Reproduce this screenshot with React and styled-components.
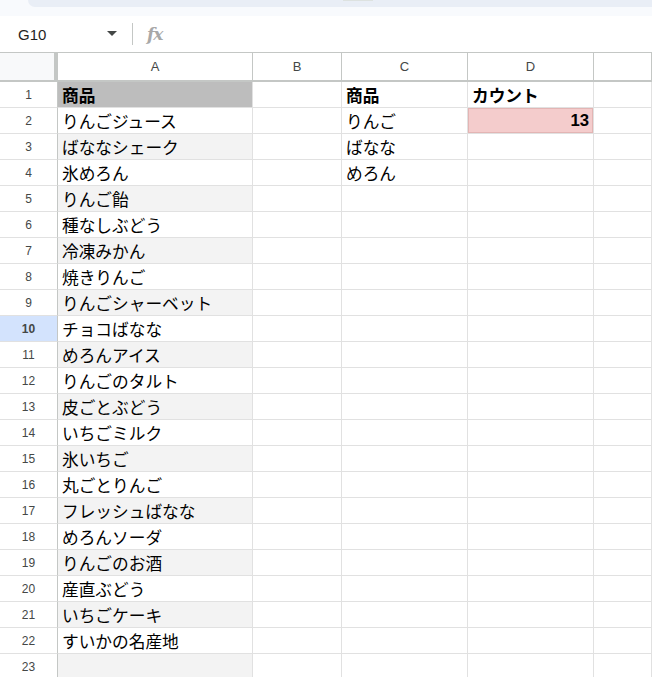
import React from "react";
import styled, { createGlobalStyle } from "styled-components";

const GlobalStyle = createGlobalStyle`
  html, body {
    margin: 0;
    padding: 0;
    background: #ffffff;
    font-family: "Liberation Sans", "Noto Sans CJK JP", sans-serif;
    overflow: hidden;
  }
`;

const Page = styled.div`
  width: 652px;
  height: 677px;
  overflow: hidden;
  background: #ffffff;
`;

const TopBand = styled.div`
  height: 16px;
  background: #f8fafd;
  display: flex;
`;

const Pill = styled.div`
  flex: 1;
  margin-left: 28px;
  height: 7px;
  background: #e9eef6;
  border-bottom-left-radius: 14px;
  display: flex;
  padding-left: 315px;
`;

const Handle = styled.div`
  width: 30px;
  height: 1px;
  background: #dde2e0;
`;

const Toolbar = styled.div`
  height: 36px;
  display: flex;
  align-items: center;
`;

const NameBox = styled.div`
  width: 132px;
  display: flex;
  align-items: center;
  justify-content: space-between;
  padding: 0 15px 0 18px;
  box-sizing: border-box;
  font-size: 15px;
  color: #1f1f1f;
`;

const Divider = styled.div`
  width: 1px;
  height: 22px;
  background: #c4c7c5;
`;

const Fx = styled.span`
  margin-left: 14px;
  font-family: "DejaVu Serif", serif;
  font-style: italic;
  font-weight: 700;
  font-size: 17px;
  color: #a8a8a8;
  letter-spacing: -1px;
`;

const Grid = styled.div`
  display: grid;
  grid-template-columns: 58px 195px 89px 126px 126px 1fr;
  grid-template-rows: 29px;
  grid-auto-rows: 26px;
  border-top: 1px solid #c4c7c5;
`;

const Corner = styled.div`
  background: #f8f9fa;
  border-right: 4px solid #c4c7c5;
  border-bottom: 2px solid #c4c7c5;
  box-sizing: border-box;
`;

const ColHead = styled.div`
  display: flex;
  align-items: center;
  justify-content: center;
  font-size: 13px;
  color: #444746;
  border-right: 1px solid #c4c7c5;
  border-bottom: 2px solid #c4c7c5;
  box-sizing: border-box;
`;

const RowHead = styled.div`
  display: flex;
  align-items: center;
  justify-content: center;
  font-size: 12px;
  color: #444746;
  font-weight: ${(p) => (p.$active ? 700 : 400)};
  background: ${(p) => (p.$active ? "#d3e3fd" : "#ffffff")};
  border-right: 1px solid #c4c7c5;
  border-bottom: 1px solid #e1e1e1;
  box-sizing: border-box;
`;

const Cell = styled.div`
  display: flex;
  align-items: center;
  justify-content: ${(p) => (p.$right ? "flex-end" : "flex-start")};
  padding: 0 4px;
  font-size: 16.7px;
  color: #000000;
  white-space: nowrap;
  font-weight: ${(p) => (p.$bold ? 700 : 400)};
  background: ${(p) => p.$bg || "transparent"};
  border-right: 1px solid #e1e1e1;
  border-bottom: 1px solid #e1e1e1;
  box-sizing: border-box;
  overflow: hidden;
  ${(p) => p.$hit && "box-shadow: inset 0 0 0 1px #e3b5b4;"}
`;

const items = [
  "商品",
  "りんごジュース",
  "ばななシェーク",
  "氷めろん",
  "りんご飴",
  "種なしぶどう",
  "冷凍みかん",
  "焼きりんご",
  "りんごシャーベット",
  "チョコばなな",
  "めろんアイス",
  "りんごのタルト",
  "皮ごとぶどう",
  "いちごミルク",
  "氷いちご",
  "丸ごとりんご",
  "フレッシュばなな",
  "めろんソーダ",
  "りんごのお酒",
  "産直ぶどう",
  "いちごケーキ",
  "すいかの名産地",
  "",
];

const side = { 1: ["商品", "カウント"], 2: ["りんご", "13"], 3: ["ばなな", ""], 4: ["めろん", ""] };

const columnBg = (row) => {
  if (row === 1) return "#bdbdbd";
  return row % 2 === 1 ? "#f3f3f3" : "#ffffff";
};

const Caret = () => (
  <svg width="10" height="6" viewBox="0 0 10 6">
    <path d="M0 0h10L5 5z" fill="#444746" />
  </svg>
);

export default function App() {
  return (
    <Page>
      <GlobalStyle />
      <TopBand>
        <Pill>
          <Handle />
        </Pill>
      </TopBand>
      <Toolbar>
        <NameBox>
          G10
          <Caret />
        </NameBox>
        <Divider />
        <Fx>fx</Fx>
      </Toolbar>
      <Grid>
        <Corner />
        {["A", "B", "C", "D", ""].map((c, i) => (
          <ColHead key={i}>{c}</ColHead>
        ))}
        {items.map((name, i) => {
          const row = i + 1;
          const [c, d] = side[row] || ["", ""];
          return (
            <React.Fragment key={row}>
              <RowHead $active={row === 10}>{row}</RowHead>
              <Cell $bg={columnBg(row)} $bold={row === 1}>
                {name}
              </Cell>
              <Cell />
              <Cell $bold={row === 1}>{c}</Cell>
              <Cell
                $bold={row <= 2}
                $right={row === 2}
                $bg={row === 2 ? "#f4cccc" : undefined}
                $hit={row === 2}
              >
                {d}
              </Cell>
              <Cell />
            </React.Fragment>
          );
        })}
      </Grid>
    </Page>
  );
}
